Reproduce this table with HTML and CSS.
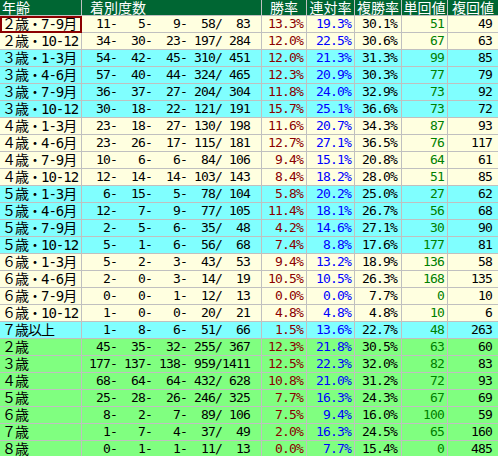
FILE: index.html
```html
<!DOCTYPE html>
<html lang="ja">
<head>
<meta charset="utf-8">
<title>年齢別成績</title>
<link rel="stylesheet" href="styles.css">
</head>
<body>
<table class="stats">
<colgroup>
<col class="c-age"><col class="c-rec"><col class="c-win"><col class="c-ren"><col class="c-fuku"><col class="c-tan"><col class="c-fk">
</colgroup>
<thead>
<tr><th class="h-age">年齢</th><th class="h-rec">着別度数</th><th>勝率</th><th>連対率</th><th>複勝率</th><th>単回値</th><th>複回値</th></tr>
</thead>
<tbody>
<tr class="cream"><td class="age sel">２歳・7-9月</td><td class="rec"> 11-   5-   9-  58/  83</td><td class="win">13.3%</td><td class="ren">19.3%</td><td class="fuku">30.1%</td><td class="tan">51</td><td class="fk">49</td></tr>
<tr class="cream"><td class="age">２歳・10-12</td><td class="rec"> 34-  30-  23- 197/ 284</td><td class="win">12.0%</td><td class="ren">22.5%</td><td class="fuku">30.6%</td><td class="tan">67</td><td class="fk">63</td></tr>
<tr class="cyan"><td class="age">３歳・1-3月</td><td class="rec"> 54-  42-  45- 310/ 451</td><td class="win">12.0%</td><td class="ren">21.3%</td><td class="fuku">31.3%</td><td class="tan">99</td><td class="fk">85</td></tr>
<tr class="cyan"><td class="age">３歳・4-6月</td><td class="rec"> 57-  40-  44- 324/ 465</td><td class="win">12.3%</td><td class="ren">20.9%</td><td class="fuku">30.3%</td><td class="tan">77</td><td class="fk">79</td></tr>
<tr class="cyan"><td class="age">３歳・7-9月</td><td class="rec"> 36-  37-  27- 204/ 304</td><td class="win">11.8%</td><td class="ren">24.0%</td><td class="fuku">32.9%</td><td class="tan">73</td><td class="fk">92</td></tr>
<tr class="cyan"><td class="age">３歳・10-12</td><td class="rec"> 30-  18-  22- 121/ 191</td><td class="win">15.7%</td><td class="ren">25.1%</td><td class="fuku">36.6%</td><td class="tan">73</td><td class="fk">72</td></tr>
<tr class="cream"><td class="age">４歳・1-3月</td><td class="rec"> 23-  18-  27- 130/ 198</td><td class="win">11.6%</td><td class="ren">20.7%</td><td class="fuku">34.3%</td><td class="tan">87</td><td class="fk">93</td></tr>
<tr class="cream"><td class="age">４歳・4-6月</td><td class="rec"> 23-  26-  17- 115/ 181</td><td class="win">12.7%</td><td class="ren">27.1%</td><td class="fuku">36.5%</td><td class="tan">76</td><td class="fk">117</td></tr>
<tr class="cream"><td class="age">４歳・7-9月</td><td class="rec"> 10-   6-   6-  84/ 106</td><td class="win">9.4%</td><td class="ren">15.1%</td><td class="fuku">20.8%</td><td class="tan">64</td><td class="fk">61</td></tr>
<tr class="cream"><td class="age">４歳・10-12</td><td class="rec"> 12-  14-  14- 103/ 143</td><td class="win">8.4%</td><td class="ren">18.2%</td><td class="fuku">28.0%</td><td class="tan">51</td><td class="fk">85</td></tr>
<tr class="cyan"><td class="age">５歳・1-3月</td><td class="rec">  6-  15-   5-  78/ 104</td><td class="win">5.8%</td><td class="ren">20.2%</td><td class="fuku">25.0%</td><td class="tan">27</td><td class="fk">62</td></tr>
<tr class="cyan"><td class="age">５歳・4-6月</td><td class="rec"> 12-   7-   9-  77/ 105</td><td class="win">11.4%</td><td class="ren">18.1%</td><td class="fuku">26.7%</td><td class="tan">56</td><td class="fk">68</td></tr>
<tr class="cyan"><td class="age">５歳・7-9月</td><td class="rec">  2-   5-   6-  35/  48</td><td class="win">4.2%</td><td class="ren">14.6%</td><td class="fuku">27.1%</td><td class="tan">30</td><td class="fk">90</td></tr>
<tr class="cyan"><td class="age">５歳・10-12</td><td class="rec">  5-   1-   6-  56/  68</td><td class="win">7.4%</td><td class="ren">8.8%</td><td class="fuku">17.6%</td><td class="tan">177</td><td class="fk">81</td></tr>
<tr class="cream"><td class="age">６歳・1-3月</td><td class="rec">  5-   2-   3-  43/  53</td><td class="win">9.4%</td><td class="ren">13.2%</td><td class="fuku">18.9%</td><td class="tan">136</td><td class="fk">58</td></tr>
<tr class="cream"><td class="age">６歳・4-6月</td><td class="rec">  2-   0-   3-  14/  19</td><td class="win">10.5%</td><td class="ren">10.5%</td><td class="fuku">26.3%</td><td class="tan">168</td><td class="fk">135</td></tr>
<tr class="cream"><td class="age">６歳・7-9月</td><td class="rec">  0-   0-   1-  12/  13</td><td class="win">0.0%</td><td class="ren">0.0%</td><td class="fuku">7.7%</td><td class="tan">0</td><td class="fk">10</td></tr>
<tr class="cream"><td class="age">６歳・10-12</td><td class="rec">  1-   0-   0-  20/  21</td><td class="win">4.8%</td><td class="ren">4.8%</td><td class="fuku">4.8%</td><td class="tan">10</td><td class="fk">6</td></tr>
<tr class="cyan"><td class="age">７歳以上</td><td class="rec">  1-   8-   6-  51/  66</td><td class="win">1.5%</td><td class="ren">13.6%</td><td class="fuku">22.7%</td><td class="tan">48</td><td class="fk">263</td></tr>
<tr class="green"><td class="age">２歳</td><td class="rec"> 45-  35-  32- 255/ 367</td><td class="win">12.3%</td><td class="ren">21.8%</td><td class="fuku">30.5%</td><td class="tan">63</td><td class="fk">60</td></tr>
<tr class="green"><td class="age">３歳</td><td class="rec">177- 137- 138- 959/1411</td><td class="win">12.5%</td><td class="ren">22.3%</td><td class="fuku">32.0%</td><td class="tan">82</td><td class="fk">83</td></tr>
<tr class="green"><td class="age">４歳</td><td class="rec"> 68-  64-  64- 432/ 628</td><td class="win">10.8%</td><td class="ren">21.0%</td><td class="fuku">31.2%</td><td class="tan">72</td><td class="fk">93</td></tr>
<tr class="green"><td class="age">５歳</td><td class="rec"> 25-  28-  26- 246/ 325</td><td class="win">7.7%</td><td class="ren">16.3%</td><td class="fuku">24.3%</td><td class="tan">67</td><td class="fk">69</td></tr>
<tr class="green"><td class="age">６歳</td><td class="rec">  8-   2-   7-  89/ 106</td><td class="win">7.5%</td><td class="ren">9.4%</td><td class="fuku">16.0%</td><td class="tan">100</td><td class="fk">59</td></tr>
<tr class="green"><td class="age">７歳</td><td class="rec">  1-   7-   4-  37/  49</td><td class="win">2.0%</td><td class="ren">16.3%</td><td class="fuku">24.5%</td><td class="tan">65</td><td class="fk">160</td></tr>
<tr class="green"><td class="age">８歳</td><td class="rec">  0-   1-   1-  11/  13</td><td class="win">0.0%</td><td class="ren">7.7%</td><td class="fuku">15.4%</td><td class="tan">0</td><td class="fk">485</td></tr>
</tbody>
</table>
</body>
</html>
```
FILE: styles.css
```css
html, body {
  margin: 0;
  padding: 0;
  background: #ffffff;
  overflow: hidden;
}

.stats {
  border-collapse: separate;
  border-spacing: 0;
  table-layout: fixed;
  width: 498px;
  font-family: "DejaVu Sans Mono", "Noto Sans CJK JP", monospace;
  font-size: 13px;
  color: #000000;
}

.c-age { width: 82px; }
.c-rec { width: 180px; }
.c-win { width: 45px; }
.c-ren { width: 48px; }
.c-fuku { width: 47px; }
.c-tan { width: 46px; }
.c-fk { width: 50px; }

.stats th,
.stats td {
  padding: 0;
  border-right: 1px solid #c0c0c0;
  border-bottom: 1px solid #c0c0c0;
  white-space: pre;
  box-sizing: content-box;
}

.stats th:last-child,
.stats td:last-child {
  border-right: none;
}

.stats th {
  height: 15px;
  line-height: 15px;
  background: #006633;
  color: #ffffff;
  font-family: "Noto Sans CJK JP", sans-serif;
  font-weight: normal;
  font-size: 14px;
  text-align: center;
}

.stats th.h-age {
  text-align: left;
  padding-left: 2px;
}

.stats th.h-rec {
  text-align: left;
  padding-left: 8px;
}

.stats td {
  height: 16px;
  line-height: 16px;
  text-align: right;
  letter-spacing: -0.83px;
  padding-right: 3px;
}

.stats td.age {
  text-align: left;
  padding-left: 2px;
  padding-right: 0;
  letter-spacing: -1px;
  font-family: "DejaVu Sans Mono", "Noto Sans CJK JP", monospace;
  font-size: 14px;
}

.stats td.sel {
  outline: 2px solid #8b0000;
  outline-offset: -2px;
}

.stats td.rec { padding-right: 11px; }
.stats td.win { color: #8b0000; }
.stats td.ren { color: #0000ff; }
.stats td.fuku { padding-right: 4px; }
.stats td.tan { color: #008000; }
.stats td.fk { padding-right: 6px; }

.cream td { background: #ffffe0; }
.cyan td { background: #80ffff; }
.green td { background: #80ff80; }
```
